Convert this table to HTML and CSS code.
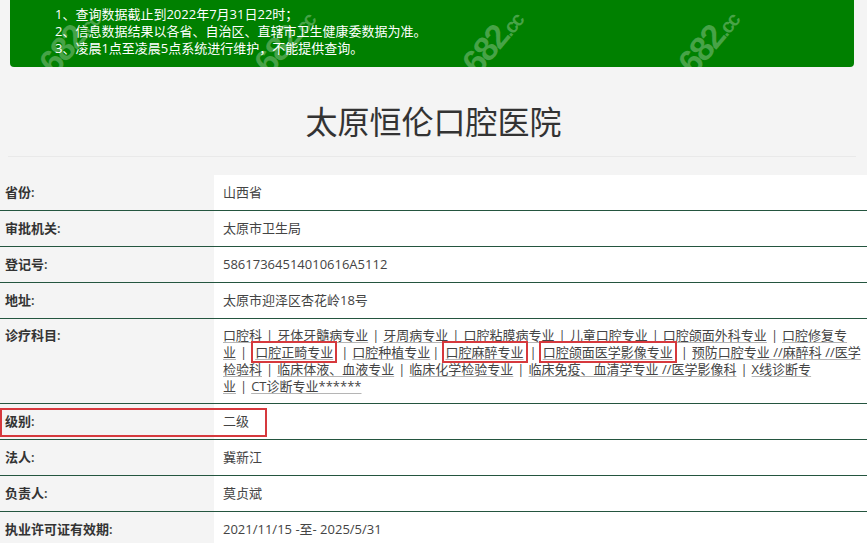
FILE: index.html
```html
<!DOCTYPE html>
<html lang="zh-CN">
<head>
    <meta charset="UTF-8">
    <meta name="viewport" content="width=device-width, initial-scale=1.0">
    <title>太原恒伦口腔医院</title>
    <link rel="stylesheet" href="styles.css">
</head>
<body>
    <div class="notice">
        <div>1、查询数据截止到2022年7月31日22时；</div>
        <div>2、信息数据结果以各省、自治区、直辖市卫生健康委数据为准。</div>
        <div>3、凌晨1点至凌晨5点系统进行维护，不能提供查询。</div>
        <span class="wm wm-1">682<small>.cc</small></span>
        <span class="wm wm-2">682<small>.cc</small></span>
        <span class="wm wm-3">682<small>.cc</small></span>
        <span class="wm wm-4">682<small>.cc</small></span>
    </div>

    <h1 class="hospital-name">太原恒伦口腔医院</h1>
    <div class="divider"></div>

    <table class="info-table">
        <colgroup>
            <col class="label-col">
            <col>
        </colgroup>
        <tr>
            <td class="label">省份:</td>
            <td class="value">山西省</td>
        </tr>
        <tr>
            <td class="label">审批机关:</td>
            <td class="value">太原市卫生局</td>
        </tr>
        <tr>
            <td class="label">登记号:</td>
            <td class="value">58617364514010616A5112</td>
        </tr>
        <tr>
            <td class="label">地址:</td>
            <td class="value">太原市迎泽区杏花岭18号</td>
        </tr>
        <tr class="services-row">
            <td class="label">诊疗科目:</td>
            <td class="value services">口腔科<span class="sep">|</span>牙体牙髓病专业<span class="sep">|</span>牙周病专业<span class="sep">|</span>口腔粘膜病专业<span class="sep">|</span>儿童口腔专业<span class="sep">|</span>口腔颌面外科专业<span class="sep">|</span>口腔修复专<br>业<span class="sep">|</span><span class="mark">口腔正畸专业</span><span class="sep">|</span>口腔种植专业<span class="sep tight">|</span><span class="mark">口腔麻醉专业</span><span class="sep tight">|</span><span class="mark">口腔颌面医学影像专业</span><span class="sep">|</span>预防口腔专业 //麻醉科 //医学<br>检验科<span class="sep">|</span>临床体液、血液专业<span class="sep">|</span>临床化学检验专业<span class="sep">|</span>临床免疫、血清学专业 //医学影像科<span class="sep">|</span>X线诊断专<br>业<span class="sep">|</span>CT诊断专业******</td>
        </tr>
        <tr>
            <td class="label level-cell">级别:<span class="level-box"></span></td>
            <td class="value">二级</td>
        </tr>
        <tr>
            <td class="label">法人:</td>
            <td class="value">冀新江</td>
        </tr>
        <tr>
            <td class="label">负责人:</td>
            <td class="value">莫贞斌</td>
        </tr>
        <tr>
            <td class="label">执业许可证有效期:</td>
            <td class="value">2021/11/15 -至- 2025/5/31</td>
        </tr>
    </table>
</body>
</html>
```

FILE: styles.css
```css
body {
    margin: 0;
    background-color: #f4f4f4;
    color: #333;
    font-family: "Open Sans", "Noto Sans CJK SC", sans-serif;
    font-size: 13px;
    overflow: hidden;
}
.notice {
    position: relative;
    overflow: hidden;
    margin: 0 13px 0 10px;
    padding: 6px 0 10px 45px;
    background-color: #008000;
    border-radius: 0 0 4px 4px;
    color: #fff;
    line-height: 17px;
}
.wm {
    position: absolute;
    top: 32px;
    color: rgba(255, 255, 255, 0.28);
    font-family: "Liberation Sans", sans-serif;
    font-size: 34px;
    font-weight: bold;
    letter-spacing: -2px;
    transform: rotate(-50deg);
}
.wm small {
    font-size: 20px;
}
.wm-1 { left: 25px; }
.wm-2 { left: 240px; }
.wm-3 { left: 448px; }
.wm-4 { left: 664px; }
.hospital-name {
    margin: 35px 0 0;
    text-align: center;
    font-size: 32px;
    font-weight: normal;
    line-height: 40px;
    color: #333;
}
.divider {
    margin: 14px 11px 0 8px;
    border-top: 1px solid #e9e9e9;
}
.info-table {
    width: 100%;
    margin-top: 18px;
    border-collapse: collapse;
    table-layout: fixed;
}
.label-col {
    width: 214px;
}
.info-table td {
    padding: 9px 5px 9px;
    line-height: 17px;
    border-bottom: 1px solid #24553f;
    vertical-align: top;
}
.info-table tr:last-child td {
    border-bottom: none;
}
.label {
    font-weight: 600;
    color: #333;
}
.value {
    padding-left: 9px !important;
    background-color: #fff;
    color: #444;
}
.services-row td {
    padding-top: 8px;
    padding-bottom: 8px;
}
.services {
    white-space: nowrap;
    text-decoration: underline;
    text-decoration-color: #b5b5b5;
    text-underline-offset: 2px;
}
.sep {
    display: inline-block;
    margin: 0 4px;
}
.sep.tight {
    margin: 0 2px;
}
.mark {
    border: 2px solid #d6393d;
    padding: 0 2px;
}
.level-cell {
    position: relative;
}
.level-box {
    position: absolute;
    left: 0;
    top: 4px;
    width: 263px;
    height: 25px;
    border: 2px solid #d6393d;
}
```
